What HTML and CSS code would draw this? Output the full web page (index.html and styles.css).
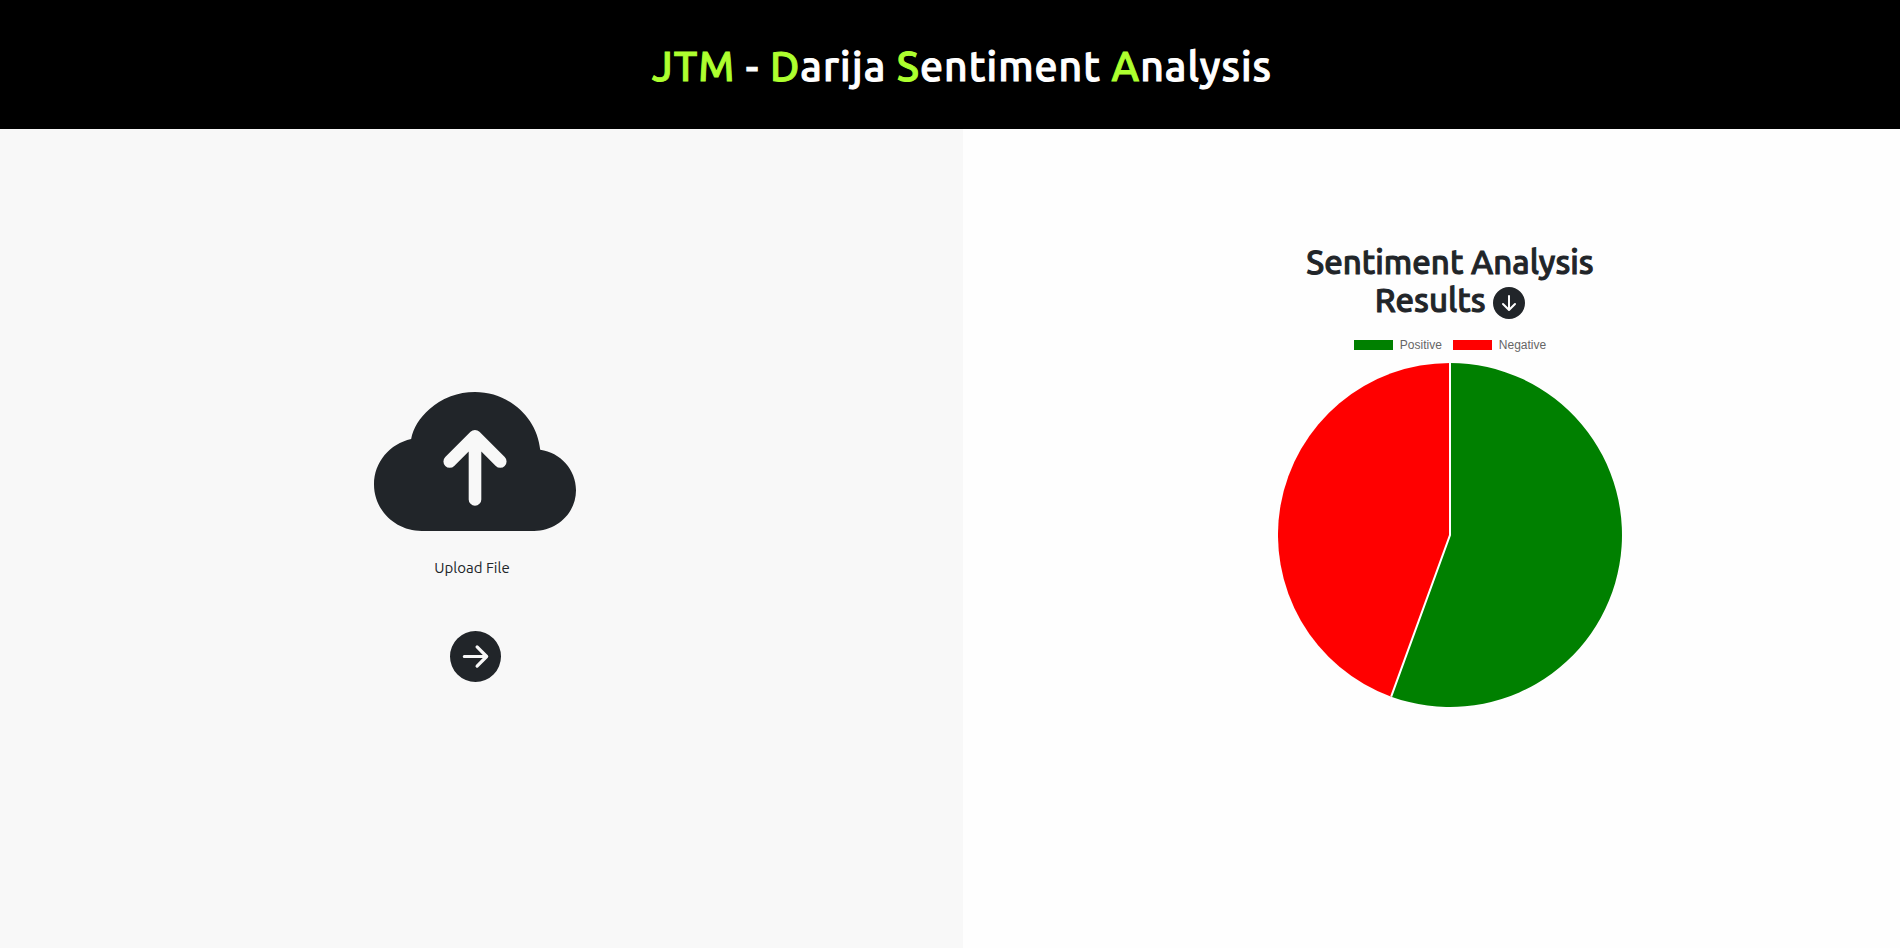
FILE: index.html
```html
<!DOCTYPE html>
<html lang="en">
<head>
<meta charset="utf-8">
<meta name="viewport" content="width=device-width, initial-scale=1">
<title>JTM - Darija Sentiment Analysis</title>
<link rel="stylesheet" href="styles.css">
</head>
<body>
<header class="site-header">
  <h1 class="site-title"><span class="accent">JTM</span> - <span class="accent">D</span>arija <span class="accent">S</span>entiment <span class="accent">A</span>nalysis</h1>
</header>
<main class="panes">
  <form class="pane upload-pane">
    <label class="upload" for="file">
      <svg class="upload-icon" viewBox="0 2 16 11" fill="currentColor" aria-hidden="true"><path d="M8 2a5.53 5.53 0 0 0-3.594 1.342c-.766.66-1.321 1.52-1.464 2.383C1.266 6.095 0 7.555 0 9.318 0 11.366 1.708 13 3.781 13h8.906C14.502 13 16 11.57 16 9.773c0-1.636-1.242-2.969-2.834-3.194C12.923 3.999 10.69 2 8 2zm2.354 5.146a.5.5 0 0 1-.708.708L8.5 6.707V10.5a.5.5 0 0 1-1 0V6.707L6.354 7.854a.5.5 0 1 1-.708-.708l2-2a.5.5 0 0 1 .708 0l2 2z"/></svg>
      <span class="upload-text">Upload File</span>
    </label>
    <input class="file-input" type="file" id="file" name="file">
    <button class="icon-button submit-button" type="button" aria-label="Analyze">
      <svg viewBox="0 0 16 16" fill="currentColor" aria-hidden="true"><path d="M8 0a8 8 0 1 1 0 16A8 8 0 0 1 8 0zM4.5 7.5a.5.5 0 0 0 0 1h5.793l-2.147 2.146a.5.5 0 0 0 .708.708l3-3a.5.5 0 0 0 0-.708l-3-3a.5.5 0 1 0-.708.708L10.293 7.5H4.5z"/></svg>
    </button>
  </form>
  <section class="pane results-pane">
    <div class="results">
      <h2 class="results-title">Sentiment Analysis Results
        <button class="icon-button download-button" type="button" aria-label="Download"><svg viewBox="0 0 16 16" fill="currentColor" aria-hidden="true"><path d="M16 8A8 8 0 1 1 0 8a8 8 0 0 1 16 0zM8.5 4.5a.5.5 0 0 0-1 0v5.793L5.354 8.146a.5.5 0 1 0-.708.708l3 3a.5.5 0 0 0 .708 0l3-3a.5.5 0 0 0-.708-.708L8.5 10.293V4.5z"/></svg></button>
      </h2>
      <ul class="legend">
        <li class="legend-item"><span class="swatch positive"></span>Positive</li>
        <li class="legend-item"><span class="swatch negative"></span>Negative</li>
      </ul>
      <svg class="pie" viewBox="-172 -172 344 344" role="img" aria-label="Positive and negative shares">
        <path class="slice positive-slice" d="M0 0V-172A172 172 0 1 1 -58.83 161.63Z"/>
        <path class="slice negative-slice" d="M0 0L-58.83 161.63A172 172 0 0 1 0 -172Z"/>
        <path class="divider" d="M0 -172V0L-58.83 161.63"/>
      </svg>
    </div>
  </section>
</main>
</body>
</html>
```
FILE: styles.css
```css
* {
  box-sizing: border-box;
}

body {
  margin: 0;
  min-height: 100vh;
  display: flex;
  flex-direction: column;
  font-family: Ubuntu, "Noto Sans", sans-serif;
  font-size: 15px;
  color: #212529;
  background: #fefefe;
}

.site-header {
  display: flex;
  align-items: center;
  justify-content: center;
  padding: 42px 0 39px 24px;
  background: #000;
  color: #fff;
}

.site-title {
  margin: 0;
  font-size: 41px;
  line-height: 48px;
  font-weight: 500;
  letter-spacing: 1px;
  -webkit-text-stroke: 1px;
}

.accent {
  color: #adff2f;
}

.panes {
  flex: 1;
  display: grid;
  grid-template-columns: 963fr 937fr;
}

.pane {
  display: flex;
  flex-direction: column;
  align-items: center;
}

.upload-pane {
  justify-content: center;
  padding: 0 13px 3px 0;
  background: #f8f8f8;
}

.upload {
  display: flex;
  flex-direction: column;
  align-items: center;
  gap: 25px;
  cursor: pointer;
}

.upload-icon {
  display: block;
  width: 202px;
  height: 139px;
  overflow: visible;
}

.upload-text {
  line-height: 24px;
  padding-right: 6px;
}

.file-input {
  display: none;
}

.icon-button {
  padding: 0;
  border: 0;
  background: none;
  color: inherit;
  cursor: pointer;
}

.icon-button svg {
  display: block;
  width: 100%;
}

.submit-button {
  width: 51px;
  margin-top: 51px;
}

.results-pane {
  padding: 114px 0 0 37px;
}

.results {
  width: 344px;
}

.results-title {
  margin: 0 0 19px;
  font-size: 33px;
  line-height: 38px;
  font-weight: 500;
  text-align: center;
  -webkit-text-stroke: 1px;
}

.download-button {
  width: 32px;
  vertical-align: -7px;
}

.legend {
  display: flex;
  justify-content: center;
  gap: 11px;
  margin: 0 0 11px;
  padding: 0;
  list-style: none;
  font: 12px/14px "Liberation Sans", Arial, sans-serif;
  color: #666;
}

.legend-item {
  display: flex;
  align-items: center;
  gap: 7px;
}

.swatch {
  width: 39px;
  height: 10px;
}

.positive {
  background: #008000;
}

.negative {
  background: #f00;
}

.pie {
  display: block;
  width: 100%;
}

.positive-slice {
  fill: #008000;
}

.negative-slice {
  fill: #f00;
}

.divider {
  fill: none;
  stroke: #fff;
  stroke-width: 2;
}
```
